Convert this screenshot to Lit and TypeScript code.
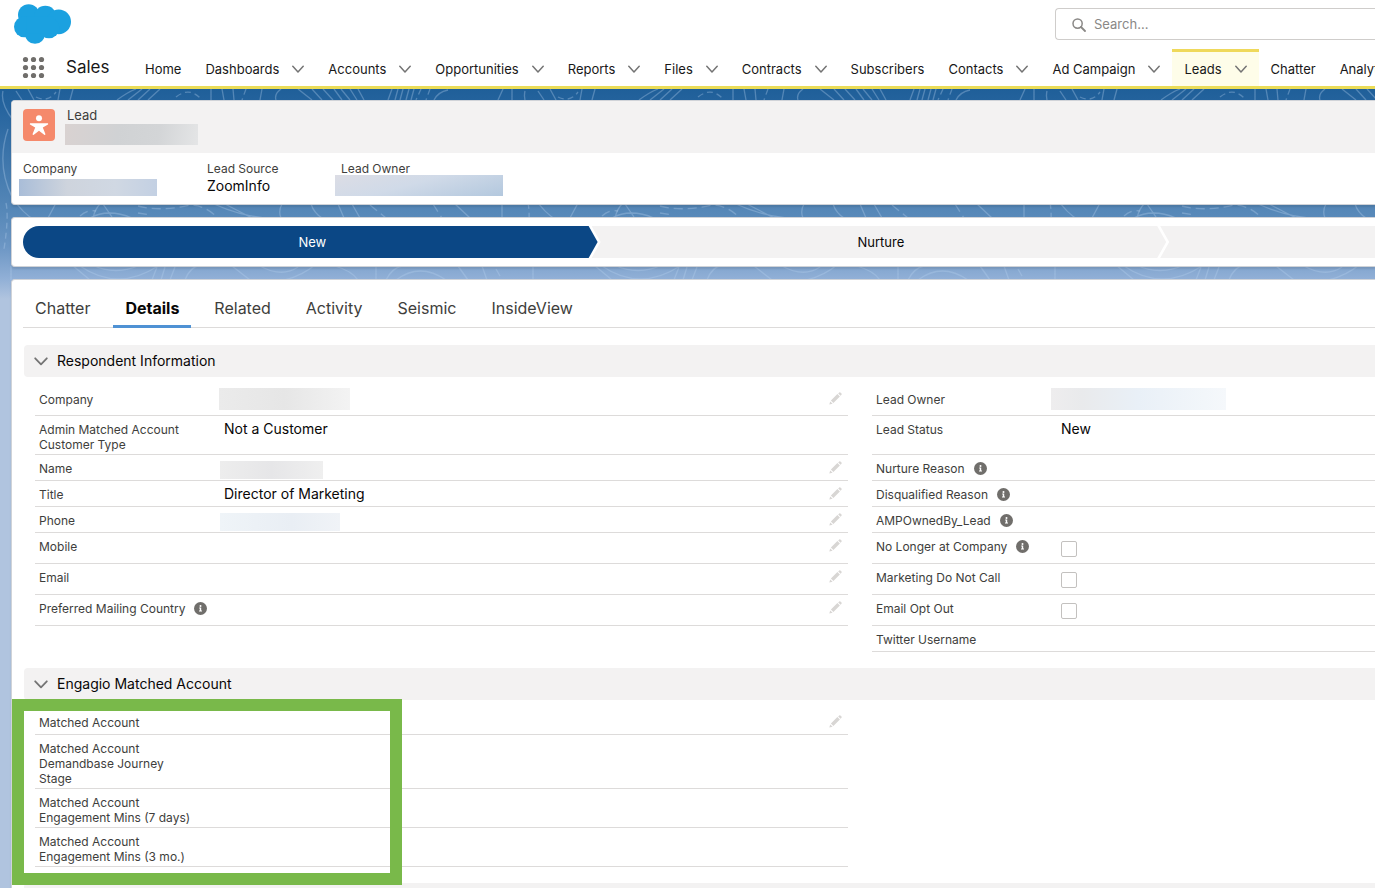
import { LitElement, html, css, svg, nothing } from "lit";
import { customElement, property } from "lit/decorators.js";
import { classMap } from "lit/directives/class-map.js";

interface Field {
  label: string;
  value?: string;
  mask?: string;
  check?: boolean;
  info?: boolean;
  edit?: boolean;
}

interface FieldRow {
  size?: "lead" | "tall";
  left?: Field;
  right?: Field;
}

const navChevron = html`<svg viewBox="1 0 12 8" width="12" height="8" aria-hidden="true">
  <path d="M1.8 1.3 L7 6.9 L12.2 1.3" fill="none" stroke="#747474" stroke-width="1.5" stroke-linecap="round" stroke-linejoin="round" />
</svg>`;

const chevron = html`<svg viewBox="0 0 14 9" width="14" height="9" aria-hidden="true">
  <path d="M1.2 1.3 L7 7.3 L12.8 1.3" fill="none" stroke="#747474" stroke-width="1.8" stroke-linecap="round" stroke-linejoin="round" />
</svg>`;

const infoIcon = html`<svg class="info" viewBox="0 0 13 13" width="13" height="13" role="img" aria-label="Help">
  <circle cx="6.5" cy="6.5" r="6.5" fill="#706e6b" />
  <circle cx="6.5" cy="3.9" r="1" fill="#fff" />
  <path d="M5.2 5.6 H7.2 V8.6 H8 V9.6 H5 V8.6 H5.8 V6.5 H5.2 Z" fill="#fff" />
</svg>`;

const pencilIcon = html`<svg viewBox="0 0 13 13" width="13" height="13" aria-hidden="true">
  <path d="M0.3 12.6 L1.2 9.4 L3.6 11.8 Z M1.9 8.6 L8.4 2.1 L10.9 4.6 L4.4 11.1 Z M9.2 1.4 L10.2 0.4 Q10.8 0 11.4 0.5 L12.5 1.6 Q13 2.2 12.5 2.8 L11.6 3.8 Z" fill="#d8d6d4" />
</svg>`;

const NAV: { name: string; menu?: boolean; active?: boolean }[] = [
  { name: "Home" },
  { name: "Dashboards", menu: true },
  { name: "Accounts", menu: true },
  { name: "Opportunities", menu: true },
  { name: "Reports", menu: true },
  { name: "Files", menu: true },
  { name: "Contracts", menu: true },
  { name: "Subscribers" },
  { name: "Contacts", menu: true },
  { name: "Ad Campaign", menu: true },
  { name: "Leads", menu: true, active: true },
  { name: "Chatter" },
  { name: "Analytics", menu: true },
];

const TABS = ["Chatter", "Details", "Related", "Activity", "Seismic", "InsideView"];

const RESPONDENT: FieldRow[] = [
  { size: "lead", left: { label: "Company", mask: "m-company", edit: true }, right: { label: "Lead Owner", mask: "m-owner" } },
  { left: { label: "Admin Matched Account\nCustomer Type", value: "Not a Customer" }, right: { label: "Lead Status", value: "New" } },
  { left: { label: "Name", mask: "m-name", edit: true }, right: { label: "Nurture Reason", info: true } },
  { left: { label: "Title", value: "Director of Marketing", edit: true }, right: { label: "Disqualified Reason", info: true } },
  { left: { label: "Phone", mask: "m-phone", edit: true }, right: { label: "AMPOwnedBy_Lead", info: true } },
  { size: "tall", left: { label: "Mobile", edit: true }, right: { label: "No Longer at Company", info: true, check: true } },
  { size: "tall", left: { label: "Email", edit: true }, right: { label: "Marketing Do Not Call", check: true } },
  { size: "tall", left: { label: "Preferred Mailing Country", info: true, edit: true }, right: { label: "Email Opt Out", check: true } },
  { right: { label: "Twitter Username" } },
];

const MATCHED: FieldRow[] = [
  { left: { label: "Matched Account", edit: true } },
  { left: { label: "Matched Account\nDemandbase Journey\nStage" } },
  { left: { label: "Matched Account\nEngagement Mins (7 days)" } },
  { left: { label: "Matched Account\nEngagement Mins (3 mo.)" } },
];

@customElement("app-nav")
export class AppNav extends LitElement {
  static styles = css`
    :host { display: block; background: #fff; border-bottom: 3px solid #ebdc57; }
    .top { display: flex; justify-content: space-between; align-items: flex-start; height: 49px; box-sizing: border-box; padding: 4px 0 0 14px; }
    .search { display: flex; align-items: center; gap: 8px; width: 320px; height: 32px; box-sizing: border-box; margin-top: 4px; padding-left: 16px; border: 1px solid #cfcdcb; border-right: 0; border-radius: 4px 0 0 4px; }
    .search svg { margin-top: 2px; }
    .search input { flex: 1; min-width: 0; border: 0; outline: 0; padding: 0; background: none; font: 13px/18px Inter, sans-serif; color: #181818; }
    .search input::placeholder { color: #8a8886; opacity: 1; }
    .bar { display: flex; align-items: stretch; height: 37px; padding-left: 22px; overflow: hidden; }
    button { border: 0; background: none; padding: 0; font: inherit; cursor: pointer; }
    .launcher { display: flex; align-items: center; flex: none; width: 23px; }
    .app { flex: none; width: 88px; padding: 0 0 2px 21px; box-sizing: border-box; display: flex; align-items: center; font-size: 17px; color: #181818; }
    .item { display: flex; align-items: center; flex: none; gap: 13px; padding: 2px 12px 0; box-sizing: border-box; font-size: 13px; line-height: 16px; }
    .item.active { background: #fefde9; border-top: 3px solid #efd95b; padding-top: 0; padding-bottom: 1px; }
    a { color: #181818; text-decoration: none; white-space: nowrap; }
    .drop { display: flex; align-items: center; }
  `;

  render() {
    return html`
      <div class="top">
        <svg viewBox="42 12 171 119" width="57" height="40" role="img" aria-label="Home cloud">
          <g fill="#1ba1e0">
            <circle cx="86" cy="44" r="32" /><circle cx="136" cy="51" r="34" />
            <circle cx="176" cy="65" r="37" /><circle cx="73" cy="80" r="31" />
            <circle cx="105" cy="101" r="30" /><circle cx="147" cy="83" r="31" />
            <path d="M80 50 H160 V100 H80 Z" />
          </g>
        </svg>
        <label class="search">
          <svg viewBox="0 0 14 14" width="14" height="14" aria-hidden="true">
            <circle cx="5.6" cy="5.6" r="4.6" fill="none" stroke="#8a8886" stroke-width="1.5" />
            <path d="M9 9 L13 13" stroke="#8a8886" stroke-width="1.8" stroke-linecap="round" />
          </svg>
          <input type="search" placeholder="Search..." aria-label="Search" />
        </label>
      </div>
      <nav class="bar">
        <button class="launcher" aria-label="App Launcher">
          <svg viewBox="0 0 23 23" width="23" height="23" fill="#706e6b">
            ${[3.5, 11.5, 19.5].map((y) => [3.5, 11.5, 19.5].map((x) => svg`<circle cx=${x} cy=${y} r="2.6" />`))}
          </svg>
        </button>
        <span class="app">Sales</span>
        ${NAV.map((n) => html`
          <div class=${classMap({ item: true, active: !!n.active })}>
            <a href="#">${n.name}</a>
            ${n.menu ? html`<button class="drop" aria-label="${n.name} list">${navChevron}</button>` : nothing}
          </div>`)}
      </nav>
    `;
  }
}

@customElement("field-list")
export class FieldList extends LitElement {
  @property({ attribute: false }) rows: FieldRow[] = [];

  static styles = css`
    :host { display: block; padding: 9px 0 16px 23px; font-size: 12px; line-height: 15px; color: #3e3e3c; }
    .row { display: grid; grid-template-columns: 813fr 503fr; gap: 24px; min-height: 26px; }
    .row.lead { min-height: 30px; }
    .row.tall { min-height: 31px; }
    .cell { display: grid; grid-template-columns: 185px 1fr 19px; align-items: start; padding-left: 4px; border-bottom: 1px solid #dddbda; }
    .label { display: flex; align-items: flex-start; gap: 9px; padding: 6px 0 2px; white-space: pre; }
    .info { margin-top: 1px; }
    .value { padding-top: 4px; font-size: 14px; line-height: 18px; color: #080707; }
    .edit { border: 0; background: none; padding: 6px 0 0; line-height: 0; text-align: left; cursor: pointer; }
    .check { appearance: none; display: block; width: 16px; height: 16px; margin: 4px 0 0; box-sizing: border-box; border: 1px solid #c3c1bf; border-radius: 2px; background: #fff; }
    .mask { margin: 2px 0 0 -4px; height: 18px; }
    .m-company { width: 131px; height: 22px; margin: -2px 0 0 -5px; background: linear-gradient(90deg, #ebebeb, #e6e6e6 50%, #f3f3f3); }
    .m-owner { width: 175px; height: 22px; margin: -2px 0 0 -10px; background: linear-gradient(90deg, #eeedee, #e9eaec 18%, #e9f0f7 50%, #f5f8fb); }
    .m-name { width: 103px; background: linear-gradient(90deg, #ededed, #e6e6e8 50%, #efefef); }
    .m-phone { width: 120px; background: linear-gradient(90deg, #eff4f8, #e9eef4 60%, #f0f3f7); }
  `;

  private cell(f?: Field) {
    if (!f) return html`<div></div>`;
    const id = f.label.replace(/\W+/g, "-").toLowerCase();
    return html`
      <div class="cell">
        <div class="label">
          ${f.check ? html`<label for=${id}>${f.label}</label>` : html`<span>${f.label}</span>`}
          ${f.info ? infoIcon : nothing}
        </div>
        <div class="value">
          ${f.mask ? html`<div class="mask ${f.mask}"></div>` : nothing}
          ${f.check ? html`<input id=${id} class="check" type="checkbox" />` : nothing}
          ${f.value ?? nothing}
        </div>
        ${f.edit ? html`<button class="edit" aria-label="Edit ${f.label}">${pencilIcon}</button>` : nothing}
      </div>`;
  }

  render() {
    return this.rows.map((r) => html`
      <div class="row ${r.size ?? ""}">${this.cell(r.left)}${this.cell(r.right)}</div>`);
  }
}

@customElement("app-root")
export class AppRoot extends LitElement {
  static styles = css`
    :host { display: flex; flex-direction: column; height: 100vh; overflow: hidden; background: #b0c4df; font-family: Inter, "Open Sans", sans-serif; font-size: 13px; color: #181818; }
    app-nav { flex: none; }
    .stage { display: grid; grid-template-columns: minmax(0, 1fr); flex: 1; min-height: 0; }
    .topo, main { grid-area: 1 / 1; }
    .topo { width: 100%; height: 210px; }
    main { display: flex; flex-direction: column; gap: 12px; padding: 11px 0 0 11px; z-index: 1; }
    .card { background: #fff; border: 1px solid #d0d3d8; border-right: 0; border-radius: 4px 0 0 4px; box-shadow: 0 2px 2px rgba(0, 0, 0, 0.1); box-sizing: border-box; overflow: hidden; flex: none; }
    .head { display: flex; gap: 10px; height: 52px; box-sizing: border-box; padding: 8px 11px; background: #f3f2f2; }
    .who { margin-top: -1px; line-height: 14px; color: #3e3e3c; }
    .kind { padding-left: 2px; }
    .mask { height: 21px; }
    .w-name { width: 133px; margin-top: 2px; background: linear-gradient(100deg, #d9d2d1, #d0d2d4 40%, #d3d5d7 70%, #e4e5e6); }
    .facts { display: grid; grid-template-columns: 184px 134px 1fr; height: 51px; padding: 8px 0 0 11px; box-sizing: border-box; }
    .fact { font-size: 12px; line-height: 16px; color: #3e3e3c; }
    .fact .value { font-size: 14px; line-height: 18px; color: #080707; }
    .w-company { width: 138px; height: 17px; margin: 2px 0 0 -4px; background: linear-gradient(90deg, #a9bdd8, #ced4dd 35%, #d0d8e3 70%, #c3d0e3); }
    .w-owner { width: 168px; margin: -2px 0 0 -6px; background: linear-gradient(165deg, #dcdde5, #d0dae8 45%, #b3c8de); }
    .path { display: flex; padding: 8px 0 8px 11px; }
    .step { flex: none; width: 42.5%; height: 32px; box-sizing: border-box; padding-left: 4px; display: flex; align-items: center; justify-content: center; color: #080707; background: #f3f2f2; text-decoration: none; clip-path: polygon(0 0, calc(100% - 9px) 0, 100% 50%, calc(100% - 9px) 100%, 0 100%, 9px 50%); }
    .step + .step { margin-left: -6px; }
    .step:last-child { flex: 1; clip-path: polygon(0 0, 100% 0, 100% 100%, 0 100%, 9px 50%); }
    .step.current { background: #0b4785; color: #fff; border-radius: 16px 0 0 16px; clip-path: polygon(0 0, calc(100% - 9px) 0, 100% 50%, calc(100% - 9px) 100%, 0 100%); }
    .details { flex: 1; }
    .tabs { display: flex; gap: 11px; margin: 10px 0 17px 11px; height: 38px; box-sizing: border-box; border-bottom: 1px solid #dddbda; }
    .tab { height: 38px; box-sizing: border-box; padding: 0 12px; border: 0; border-bottom: 3px solid transparent; background: none; font: 16px/34px Inter, sans-serif; color: #3e3e3c; cursor: pointer; }
    .tab.on { font-weight: 700; color: #080707; border-bottom-color: #4f92d4; }
    .bar { display: flex; align-items: center; gap: 9px; width: calc(100% - 12px); height: 32px; margin-left: 12px; padding: 0 0 0 10px; border: 0; border-radius: 4px 0 0 4px; background: #f3f2f2; font: 14px/20px Inter, sans-serif; color: #080707; text-align: left; cursor: pointer; }
    .marked { position: relative; }
    .frame { position: absolute; inset: -1px auto -2px 0; width: 390px; box-sizing: border-box; border: 12px solid #79b94a; pointer-events: none; }
  `;

  render() {
    return html`
      <app-nav></app-nav>
      <div class="stage">
        <svg class="topo" aria-hidden="true">
          <defs>
            <linearGradient id="sky" x1="0" y1="0" x2="0" y2="1">
              <stop offset="0" stop-color="#1f5f99" />
              <stop offset="0.1" stop-color="#27659f" />
              <stop offset="0.6" stop-color="#5889b9" />
              <stop offset="0.75" stop-color="#6c96c4" />
              <stop offset="0.9" stop-color="#90afd6" />
              <stop offset="1" stop-color="#b0c4df" />
            </linearGradient>
            <pattern id="lines" width="522" height="210" patternUnits="userSpaceOnUse">
              <g fill="none" stroke="#b5d2ee" stroke-opacity="0.34" stroke-width="1.3">
                <path d="M3 2 Q0 14 13 31 M16 2 L22 11 M28 0 L34 11 M60 0 L58 11 M73 0 L70 11 M117 11 Q128 3 136 0 M128 11 L142 0 M138 11 L150 0 M148 11 L160 0 M211 0 V11 M222 0 L224 11 M233 0 L234 11 M262 0 L260 11 M281 0 Q274 5 276 11 M298 0 L312 11 M312 0 L322 11 M323 0 L333 11 M334 0 L342 11 M341 0 L350 11 M350 0 L357 11 M358 0 L364 11 M392 0 L388 11 M398 0 L395 11 M403 0 L400 11 M409 0 L406 11 M414 0 L411 11 M448 1 Q438 3 434 11 M503 0 L498 11 M512 0 V11" />
                <path stroke-dasharray="6 4" d="M176 8 Q190 -3 202 11 M246 0 L242 11 M421 0 L416 11 M430 0 L426 11 M36 8 Q48 14 56 3 M6 114 Q9 128 4 160 M20 40 Q10 50 16 60" />
                <path d="M8 40 Q-4 75 12 108 Q22 124 36 132 M56 114 L48 129 M90 129 Q108 119 132 129 M93 129 Q95 120 100 115 M103 115 L112 128 M214 115 Q238 126 264 129 M225 115 L252 129 M282 115 Q278 122 281 129 M311 115 Q314 124 322 129 M338 115 L344 129 M352 115 L360 129 M455 115 L470 129 M502 115 V129" />
                <path stroke-dasharray="9 5" d="M80 127 Q88 120 96 122 M138 117 Q160 123 190 116 Q205 116 218 129 M138 124 L150 126 M370 116 L386 129 M433 115 L442 129" />
                <path d="M11 177 V191 M72 176 Q84 186 90 191 M80 177 Q118 203 158 177 M92 176 Q116 187 140 176 M157 178 L152 191 M165 178 L161 191 M175 178 L170 191 M185 191 Q190 178 200 176 M232 177 L250 191 M260 177 Q282 189 298 178 M285 191 Q303 186 315 176 M335 177 Q352 182 358 191 M376 178 V191 M386 191 Q392 179 402 177 M396 191 Q420 173 446 191 M458 177 L468 191 M482 177 L487 191 M496 180 L500 187" />
              </g>
            </pattern>
          </defs>
          <rect width="100%" height="210" fill="url(#sky)" />
          <rect width="100%" height="210" fill="url(#lines)" />
        </svg>
        <main>
          <section class="card">
            <div class="head">
              <svg viewBox="0 0 32 32" width="32" height="32" aria-hidden="true">
                <rect width="32" height="32" rx="4" fill="#f5896b" />
                <circle cx="16" cy="9.3" r="3" fill="#fff" />
                <path d="M7 14.2 Q6.4 15.2 7.4 15.8 L12.2 18.6 L9.6 25 Q9.6 26.4 10.8 25.8 L16 21.8 L21.2 25.8 Q22.4 26.4 22.4 25 L19.8 18.6 L24.6 15.8 Q25.6 15.2 25 14.2 Z" fill="#fff" />
              </svg>
              <div class="who"><div class="kind">Lead</div><div class="mask w-name"></div></div>
            </div>
            <div class="facts">
              <div class="fact">Company<div class="mask w-company"></div></div>
              <div class="fact">Lead Source<div class="value">ZoomInfo</div></div>
              <div class="fact">Lead Owner<div class="mask w-owner"></div></div>
            </div>
          </section>

          <nav class="card path" aria-label="Lead path">
            <a class="step current" href="#">New</a>
            <a class="step" href="#">Nurture</a>
            <a class="step" href="#" aria-label="Next stage"></a>
          </nav>

          <section class="card details">
            <div class="tabs" role="tablist">
              ${TABS.map((t) => html`<button role="tab" class=${classMap({ tab: true, on: t === "Details" })}>${t}</button>`)}
            </div>
            <button class="bar">${chevron}Respondent Information</button>
            <field-list .rows=${RESPONDENT}></field-list>
            <button class="bar">${chevron}Engagio Matched Account</button>
            <div class="marked">
              <field-list .rows=${MATCHED}></field-list>
              <div class="frame"></div>
            </div>
            <button class="bar" aria-label="Next section"></button>
          </section>
        </main>
      </div>
    `;
  }
}
